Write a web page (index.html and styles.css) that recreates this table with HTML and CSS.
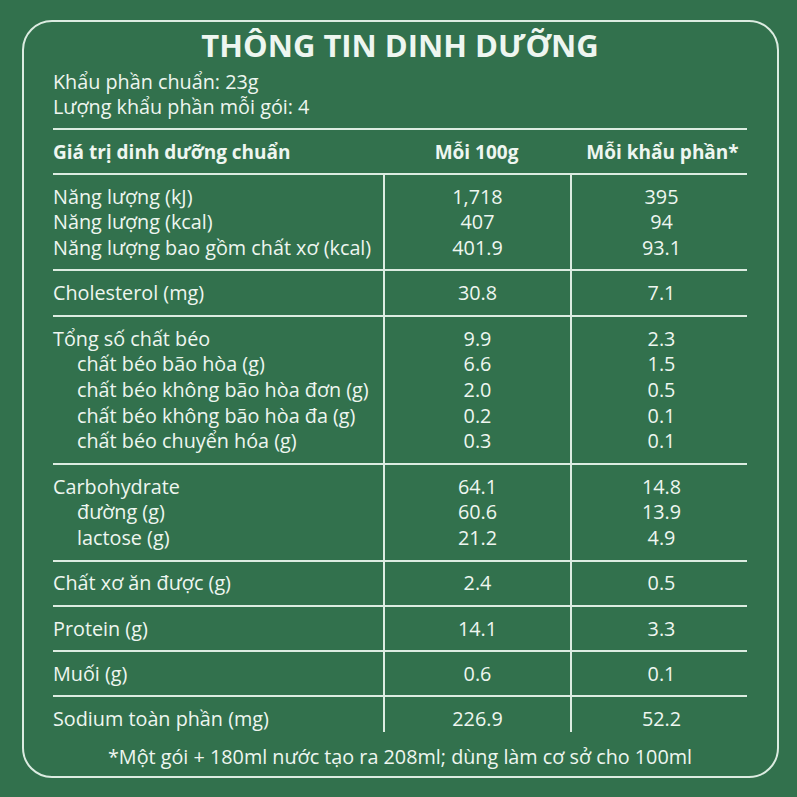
FILE: index.html
```html
<!DOCTYPE html>
<html lang="vi">
<head>
<meta charset="utf-8">
<title>Thông tin dinh dưỡng</title>
<link rel="stylesheet" href="styles.css">
</head>
<body>
<div class="frame">
  <h1 class="title">THÔNG TIN DINH DƯỠNG</h1>
  <div class="serving">
    <div>Khẩu phần chuẩn: 23g</div>
    <div>Lượng khẩu phần mỗi gói: 4</div>
  </div>
  <table class="nt">
    <colgroup>
      <col class="c1"><col class="c2"><col class="c3">
    </colgroup>
    <thead>
      <tr>
        <th class="label">Giá trị dinh dưỡng chuẩn</th>
        <th class="num">Mỗi 100g</th>
        <th class="num">Mỗi khẩu phần*</th>
      </tr>
    </thead>
    <tbody>
      <tr><td class="label">Năng lượng (kJ)<br>Năng lượng (kcal)<br>Năng lượng bao gồm chất xơ (kcal)</td><td class="num">1,718<br>407<br>401.9</td><td class="num">395<br>94<br>93.1</td></tr>
      <tr><td class="label">Cholesterol (mg)</td><td class="num">30.8</td><td class="num">7.1</td></tr>
      <tr><td class="label">Tổng số chất béo<br><span class="sub">chất béo bão hòa (g)</span><br><span class="sub">chất béo không bão hòa đơn (g)</span><br><span class="sub">chất béo không bão hòa đa (g)</span><br><span class="sub">chất béo chuyển hóa (g)</span></td><td class="num">9.9<br>6.6<br>2.0<br>0.2<br>0.3</td><td class="num">2.3<br>1.5<br>0.5<br>0.1<br>0.1</td></tr>
      <tr><td class="label">Carbohydrate<br><span class="sub">đường (g)</span><br><span class="sub">lactose (g)</span></td><td class="num">64.1<br>60.6<br>21.2</td><td class="num">14.8<br>13.9<br>4.9</td></tr>
      <tr><td class="label">Chất xơ ăn được (g)</td><td class="num">2.4</td><td class="num">0.5</td></tr>
      <tr><td class="label">Protein (g)</td><td class="num">14.1</td><td class="num">3.3</td></tr>
      <tr><td class="label">Muối (g)</td><td class="num">0.6</td><td class="num">0.1</td></tr>
      <tr class="last"><td class="label">Sodium toàn phần (mg)</td><td class="num">226.9</td><td class="num">52.2</td></tr>
    </tbody>
  </table>
  <p class="foot">*Một gói + 180ml nước tạo ra 208ml; dùng làm cơ sở cho 100ml</p>
</div>
</body>
</html>
```
FILE: styles.css
```css
html, body {
  margin: 0;
  padding: 0;
}
body {
  width: 797px;
  height: 797px;
  background: #32714d;
  color: #eef6f0;
  font-family: "Open Sans", "Lato", sans-serif;
  padding: 20px 0 0 22px;
  box-sizing: border-box;
}
.frame {
  width: 757px;
  height: 758px;
  box-sizing: border-box;
  border: 2px solid #dcece1;
  border-radius: 30px;
  padding: 0 30px 0 29px;
}
.title {
  margin: 5px 0 0;
  text-align: center;
  font-size: 31px;
  font-weight: 700;
  line-height: 36px;
}
.serving {
  margin-top: 6px;
  font-size: 19.8px;
  line-height: 25px;
}
.nt {
  width: 694px;
  margin-top: 9px;
  border-collapse: separate;
  border-spacing: 0;
  table-layout: fixed;
  font-size: 19.8px;
  line-height: 25.7px;
}
.c1 { width: 330px; }
.c2 { width: 187px; }
.c3 { width: 177px; }
.nt th {
  font-size: 19px;
  font-weight: 700;
  padding: 10px 0 7px;
  border-top: 2px solid #dcece1;
  white-space: nowrap;
}
.nt th.label { text-align: left; }
.nt th.num { text-align: center; }
.nt th.num:last-child { padding-left: 8px; }
.nt td {
  padding: 8.8px 0;
  vertical-align: top;
  border-top: 2px solid #dcece1;
  white-space: nowrap;
}
.nt tr.last td {
  padding-bottom: 0;
}
.nt .label {
  text-align: left;
}
.nt td.num {
  border-left: 2px solid #dcece1;
  text-align: center;
}
.nt td.num:last-child { padding-left: 4px; }
.sub {
  padding-left: 24px;
}
.foot {
  margin: 12px 0 0;
  text-align: center;
  font-size: 19.8px;
  line-height: 25px;
}
```
